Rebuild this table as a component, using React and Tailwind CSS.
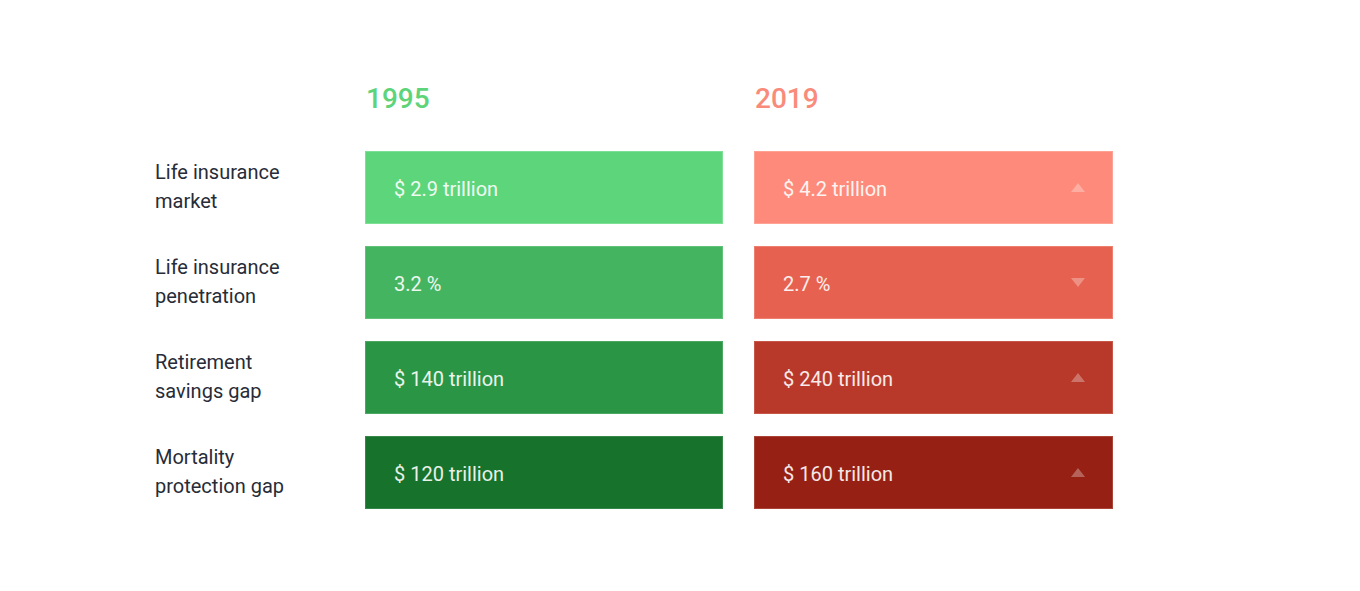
import React from "react";

const rows = [
  {
    label: ["Life insurance", "market"],
    old: "$ 2.9 trillion",
    now: "$ 4.2 trillion",
    up: true,
    green: "bg-[#5cd57b] border-[#7ee096]",
    red: "bg-[#fd8a7a] border-[#ffa293]",
  },
  {
    label: ["Life insurance", "penetration"],
    old: "3.2 %",
    now: "2.7 %",
    up: false,
    green: "bg-[#44b460] border-[#62c27a]",
    red: "bg-[#e6614f] border-[#ee7e6e]",
  },
  {
    label: ["Retirement", "savings gap"],
    old: "$ 140 trillion",
    now: "$ 240 trillion",
    up: true,
    green: "bg-[#2a9545] border-[#4aa862]",
    red: "bg-[#b8382a] border-[#c65648]",
  },
  {
    label: ["Mortality", "protection gap"],
    old: "$ 120 trillion",
    now: "$ 160 trillion",
    up: true,
    green: "bg-[#17722b] border-[#38874a]",
    red: "bg-[#962013] border-[#aa4236]",
  },
];

const Triangle = ({ up }) => (
  <svg width="14" height="9" viewBox="0 0 14 9" className="opacity-30">
    {up ? (
      <polygon points="7,0 14,9 0,9" fill="#ffffff" />
    ) : (
      <polygon points="0,0 14,0 7,9" fill="#ffffff" />
    )}
  </svg>
);

const App = () => {
  return (
    <div
      className="w-[1360px] h-[591px] bg-white pl-[155px] pt-[80px]"
      style={{ fontFamily: "Roboto, 'Liberation Sans', sans-serif" }}
    >
      {/* Year headers */}
      <div className="flex h-[38px] items-center">
        <div className="w-[210px]" />
        <div className="w-[358px] pl-[1px] text-[28px] font-medium text-[#5dd47a]">1995</div>
        <div className="w-[31px]" />
        <div className="w-[359px] pl-[1px] text-[28px] font-medium text-[#f98b7b]">2019</div>
      </div>

      {/* Rows */}
      <div className="flex flex-col gap-[22px] mt-[33px]">
        {rows.map((r) => (
          <div key={r.label[0] + r.label[1]} className="flex h-[73px] items-center">
            <div className="w-[210px] pb-[2px] text-[20px] leading-[29px] text-[#272c38]">
              {r.label[0]}
              <br />
              {r.label[1]}
            </div>
            <div
              className={`w-[358px] h-[73px] border flex items-center pl-[28px] pt-[2px] text-[20px] text-white/90 ${r.green}`}
            >
              {r.old}
            </div>
            <div className="w-[31px]" />
            <div
              className={`w-[359px] h-[73px] border flex items-center justify-between pl-[28px] pr-[27px] text-[20px] text-white/90 ${r.red}`}
            >
              <span className="pt-[2px]">{r.now}</span>
              <Triangle up={r.up} />
            </div>
          </div>
        ))}
      </div>
    </div>
  );
};

export default App;
